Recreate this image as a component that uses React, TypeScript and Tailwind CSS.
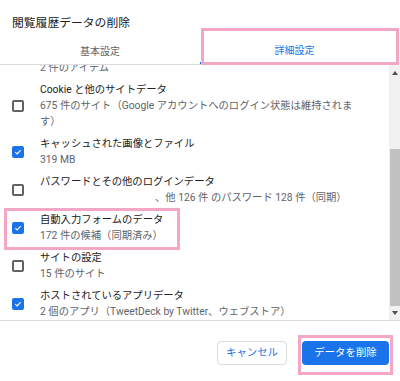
import { ReactNode } from 'react'

type Item = {
  title: string
  detail: ReactNode
  checked: boolean
}

const items: Item[] = [
  {
    title: 'Cookie と他のサイトデータ',
    detail: (
      <>
        675 件のサイト（Google アカウントへのログイン状態は維持されま
        <br />
        す）
      </>
    ),
    checked: false,
  },
  { title: 'キャッシュされた画像とファイル', detail: '319 MB', checked: true },
  {
    title: 'パスワードとその他のログインデータ',
    detail: <span className="pl-[115px]">、他 126 件 のパスワード 128 件（同期）</span>,
    checked: false,
  },
  { title: '自動入力フォームのデータ', detail: '172 件の候補（同期済み）', checked: true },
  { title: 'サイトの設定', detail: '15 件のサイト', checked: false },
  { title: 'ホストされているアプリデータ', detail: '2 個のアプリ（TweetDeck by Twitter、ウェブストア）', checked: true },
]

function Checkbox({ checked }: { checked: boolean }) {
  if (checked) {
    return (
      <div className="w-[12px] h-[12px] rounded-[2px] bg-[#1a73e8] flex items-center justify-center shrink-0">
        <svg width="8" height="8" viewBox="0 0 8 8" fill="none">
          <path d="M1.3 4.2 L3.1 5.9 L6.7 2.2" stroke="white" strokeWidth="1.1" />
        </svg>
      </div>
    )
  }
  return <div className="w-[12px] h-[12px] rounded-[2px] border-2 border-[#5f6368] shrink-0" />
}

export default function App() {
  return (
    <div
      className="relative w-[400px] h-[381px] bg-white overflow-hidden flex flex-col"
      style={{ fontFamily: "Roboto, 'Noto Sans CJK JP', sans-serif" }}
    >
      <div className="pt-[15px] pl-[12px] text-[11.8px] leading-[16px] text-[#202124]">閲覧履歴データの削除</div>

      {/* tabs */}
      <div className="flex h-[34px] border-b border-[#dadce0] mr-[11px]">
        <div className="w-[200px] flex items-center justify-center pt-[9px] text-[10px] leading-[14px] text-[#5f6368]">
          基本設定
        </div>
        <div className="flex-1 flex items-center justify-center pt-[9px] text-[10px] leading-[14px] text-[#1a73e8] border-b-2 border-[#1a73e8]">
          詳細設定
        </div>
      </div>

      {/* list + scrollbar */}
      <div className="flex h-[256px] border-b border-[#dadce0]">
        <div className="flex-1 overflow-hidden">
          {/* tail of the item scrolled above */}
          <div className="mt-[-5px] pb-[3px] pl-[40px] text-[10.3px] leading-[16px] text-[#5f6368]">2 件のアイテム</div>
          {items.map((item) => (
            <div key={item.title} className="flex items-center gap-[16px] pl-[12px] py-[3px]">
              <Checkbox checked={item.checked} />
              <div className="text-[10.3px] leading-[16px]">
                <div className="text-[#202124] whitespace-nowrap">{item.title}</div>
                <div className="text-[#5f6368] whitespace-nowrap">{item.detail}</div>
              </div>
            </div>
          ))}
        </div>
        <div className="w-[11px] bg-[#f1f1f1] flex flex-col">
          <div className="h-[16px] flex items-center justify-center">
            <svg width="6" height="4" viewBox="0 0 6 4">
              <path d="M0 4 L3 0 L6 4 Z" fill="#505050" />
            </svg>
          </div>
          <div className="h-[68px]" />
          <div className="h-[157px] bg-[#c1c1c1] ml-[1px]" />
          <div className="flex-1 flex items-center justify-center">
            <svg width="6" height="4" viewBox="0 0 6 4">
              <path d="M0 0 L6 0 L3 4 Z" fill="#505050" />
            </svg>
          </div>
        </div>
      </div>

      {/* footer */}
      <div className="flex-1 flex justify-end items-start pt-[20px] pr-[11px] gap-[15px]">
        <button className="w-[70px] h-[24px] rounded-[4px] border border-[#dadce0] bg-white text-[10.4px] text-[#1a73e8]">
          キャンセル
        </button>
        <button className="w-[87px] h-[24px] rounded-[4px] bg-[#1a73e8] text-[10.4px] text-white">
          データを削除
        </button>
      </div>

      {/* annotation boxes */}
      <div className="absolute left-[201px] top-[28px] w-[198px] h-[37px] border-[3px] border-[#f4a7c4]" />
      <div className="absolute left-[4px] top-[208px] w-[176px] h-[42px] border-[3px] border-[#f4a7c4]" />
      <div className="absolute left-[298px] top-[335px] w-[95px] h-[40px] border-[3px] border-[#f4a7c4]" />
    </div>
  )
}
